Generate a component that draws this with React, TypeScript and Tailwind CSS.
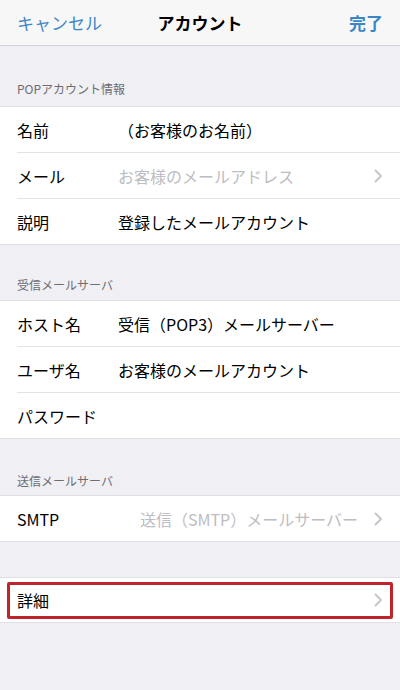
import React from 'react';

const FONT = { fontFamily: '"Noto Sans CJK JP", "Noto Sans", sans-serif' };

const Chevron = () => (
  <svg width="9" height="14" viewBox="0 0 9 14" className="shrink-0">
    <path d="M1.5 1.5 L7 7 L1.5 12.5" fill="none" stroke="#c4c4c9" strokeWidth="1.8" strokeLinecap="round" strokeLinejoin="round" />
  </svg>
);

interface RowProps {
  label: string;
  value?: string;
  placeholder?: boolean;
  chevron?: boolean;
  rightValue?: boolean;
}

const Row: React.FC<RowProps> = ({ label, value, placeholder, chevron, rightValue }) => (
  <div className="h-[45px] flex items-center pl-[17px] pr-[17px] bg-white">
    <span className="w-[101px] shrink-0 text-[16px] text-black whitespace-nowrap">{label}</span>
    <span
      className={`flex-1 text-[16px] whitespace-nowrap ${placeholder ? 'text-[#bdbdc2]' : 'text-black'} ${rightValue ? 'text-right pr-[16px]' : ''}`}
    >
      {value}
    </span>
    {chevron && <Chevron />}
  </div>
);

const Divider = () => <div className="h-px bg-[#e3e3e6] ml-[17px]" />;

// header heights differ a little per section in the reference
const SectionHeader: React.FC<{ title: string; className: string }> = ({ title, className }) => (
  <div className={`flex items-end pl-[17px] ${className}`}>
    <span className="text-[12px] leading-[16px] text-[#6d6d72]">{title}</span>
  </div>
);

const Section: React.FC<{ children: React.ReactNode }> = ({ children }) => (
  <div className="bg-white border-y border-[#e0e0e4]">{children}</div>
);

export default function App() {
  return (
    <div className="w-[400px] h-[690px] bg-[#efeff4] overflow-hidden" style={FONT}>
      <div className="h-[46px] bg-[#f7f7f8] border-b border-[#d4d4d8] flex items-center justify-between px-[17px] relative">
        <span className="text-[17px] text-[#3d86c6]">キャンセル</span>
        <span className="absolute left-0 right-0 text-center text-[17px] font-bold text-black pointer-events-none">アカウント</span>
        <span className="text-[17px] font-bold text-[#3d86c6]">完了</span>
      </div>

      <SectionHeader title="POPアカウント情報" className="h-[60px] pb-[9px]" />
      <Section>
        <Row label="名前" value="（お客様のお名前）" />
        <Divider />
        <Row label="メール" value="お客様のメールアドレス" placeholder chevron />
        <Divider />
        <Row label="説明" value="登録したメールアカウント" />
      </Section>

      <SectionHeader title="受信メールサーバ" className="h-[55px] pb-[7px]" />
      <Section>
        <Row label="ホスト名" value="受信（POP3）メールサーバー" />
        <Divider />
        <Row label="ユーザ名" value="お客様のメールアカウント" />
        <Divider />
        <Row label="パスワード" />
      </Section>

      <SectionHeader title="送信メールサーバ" className="h-[56px] pb-[6px]" />
      <Section>
        <Row label="SMTP" value="送信（SMTP）メールサーバー" placeholder chevron rightValue />
      </Section>

      <div className="h-[35px]" />
      <Section>
        <div className="h-[44px] flex items-center px-[7px] bg-white">
          <div className="flex-1 h-[37px] border-[3px] border-[#c0242b] rounded-[2px] flex items-center pl-[7px] pr-[7px]">
            <span className="flex-1 text-[16px] text-black">詳細</span>
            <Chevron />
          </div>
        </div>
      </Section>
    </div>
  );
}
